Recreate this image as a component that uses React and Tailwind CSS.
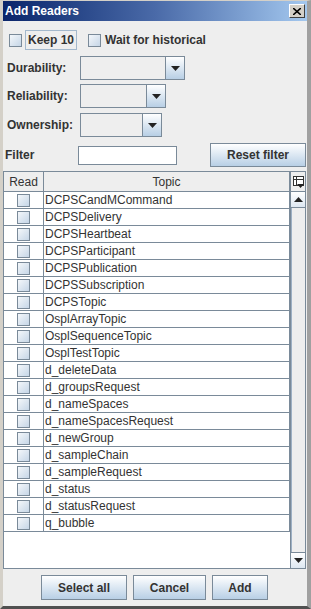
import React from "react";

const topics = [
  "DCPSCandMCommand",
  "DCPSDelivery",
  "DCPSHeartbeat",
  "DCPSParticipant",
  "DCPSPublication",
  "DCPSSubscription",
  "DCPSTopic",
  "OsplArrayTopic",
  "OsplSequenceTopic",
  "OsplTestTopic",
  "d_deleteData",
  "d_groupsRequest",
  "d_nameSpaces",
  "d_nameSpacesRequest",
  "d_newGroup",
  "d_sampleChain",
  "d_sampleRequest",
  "d_status",
  "d_statusRequest",
  "q_bubble",
];

function Check() {
  return (
    <span className="block w-[13px] h-[13px] border border-[#7a8a99] bg-gradient-to-br from-[#f4f7fa] to-[#c6d6e7]" />
  );
}

function Arrow({ up }) {
  return (
    <svg width="9" height="5" viewBox="0 0 9 5">
      <path d={up ? "M0 5 L4.5 0 L9 5 Z" : "M0 0 L9 0 L4.5 5 Z"} fill="#222" />
    </svg>
  );
}

function Combo({ boxW, label }) {
  return (
    <div className="flex items-center h-[24px]">
      <span className="w-[77px] pl-[4px] font-bold text-[12px] text-[#333]">{label}</span>
      <div className="flex h-[24px]">
        <div className={`h-full border border-[#7a8a99] bg-[#eeeeee] ${boxW}`} />
        <div className="w-[19px] h-full border border-l-0 border-[#7a8a99] bg-gradient-to-b from-[#ffffff] to-[#b8cfe5] flex items-center justify-center">
          <Arrow />
        </div>
      </div>
    </div>
  );
}

function Btn({ children, w }) {
  return (
    <div className={`${w} h-[25px] border border-[#7a8a99] bg-gradient-to-b from-[#ffffff] to-[#b8cfe5] flex items-center justify-center font-bold text-[12px] text-[#333]`}>
      {children}
    </div>
  );
}

export default function App() {
  return (
    <div
      className="w-[311px] h-[609px] flex flex-col bg-[#eeeeee] border-t border-l-[3px] border-r-[4px] border-b-[3px] border-t-[#d4d0c8] border-l-[#d4d0c8] border-r-[#a0a0a0] border-b-[#505050] overflow-hidden"
      style={{ fontFamily: '"Liberation Sans", Arial, sans-serif' }}
    >
      {/* title bar */}
      <div className="h-[20px] -mx-[3px] px-[5px] flex items-center justify-between bg-gradient-to-r from-[#0a246a] via-[#4a6aa8] to-[#a6caf0]">
        <span className="text-white font-bold text-[12px]">Add Readers</span>
        <div className="w-[16px] h-[14px] bg-[#d4d0c8] border border-t-white border-l-white border-r-[#404040] border-b-[#404040] flex items-center justify-center">
          <svg width="8" height="7" viewBox="0 0 8 7">
            <path d="M0 0 L8 7 M8 0 L0 7" stroke="#000" strokeWidth="1.6" />
          </svg>
        </div>
      </div>

      {/* checkboxes */}
      <div className="mt-[9px] h-[20px] flex items-center pl-[6px]">
        <Check />
        <span className="ml-[3px] h-[20px] px-[2px] flex items-center border border-[#a3b8cc] font-bold text-[12px] text-[#333]">
          Keep 10
        </span>
        <span className="ml-[11px]"><Check /></span>
        <span className="ml-[4px] font-bold text-[12px] text-[#333]">Wait for historical</span>
      </div>

      <div className="mt-[6px]"><Combo label="Durability:" boxW="w-[86px]" /></div>
      <div className="mt-[4px]"><Combo label="Reliability:" boxW="w-[67px]" /></div>
      <div className="mt-[5px]"><Combo label="Ownership:" boxW="w-[63px]" /></div>

      {/* filter */}
      <div className="mt-[6px] h-[24px] flex items-center">
        <span className="w-[75px] pl-[2px] font-bold text-[12px] text-[#333]">Filter</span>
        <div className="w-[99px] h-[19px] border border-[#7a8a99] bg-white" />
        <div className="ml-auto mr-[1px]">
          <Btn w="w-[96px] !h-[24px]">Reset filter</Btn>
        </div>
      </div>

      {/* table */}
      <div className="mt-[4px] mr-[1px] h-[398px] border border-[#7a8a99] flex bg-white">
        <div className="flex-1 flex flex-col">
          <div className="h-[20px] flex border-b border-[#7a8a99] bg-[#eeeeee] text-[12px] text-[#333]">
            <span className="w-[40px] border-r border-[#7a8a99] flex items-center justify-center">Read</span>
            <span className="flex-1 border-r border-[#7a8a99] flex items-center justify-center">Topic</span>
          </div>
          {topics.map((t) => (
            <div key={t} className="h-[17px] flex border-b border-[#7a8a99] text-[12px] text-[#333]">
              <span className="w-[40px] border-r border-[#7a8a99] flex items-center justify-center">
                <Check />
              </span>
              <span className="flex-1 border-r border-[#7a8a99] pl-[1px] flex items-center">{t}</span>
            </div>
          ))}
        </div>
        {/* scrollbar */}
        <div className="w-[15px] flex flex-col bg-[#eeeeee] border-l border-[#7a8a99]">
          <div className="h-[20px] border-b border-[#7a8a99] flex items-center justify-center">
            <svg width="11" height="12" viewBox="0 0 11 12">
              <rect x="0.5" y="0.5" width="10" height="9" fill="#fff" stroke="#333" />
              <path d="M0.5 3.5 H10.5 M3.5 0.5 V9.5" stroke="#333" />
              <path d="M4 8 H11 L7.5 12 Z" fill="#222" />
            </svg>
          </div>
          <div className="h-[16px] border-b border-[#7a8a99] bg-gradient-to-b from-[#ffffff] to-[#dde7f1] flex items-center justify-center">
            <Arrow up />
          </div>
          <div className="flex-1 border-l border-[#9db0c4] bg-[#eeeeee]" />
          <div className="h-[16px] border-t border-[#7a8a99] bg-gradient-to-b from-[#ffffff] to-[#dde7f1] flex items-center justify-center">
            <Arrow />
          </div>
        </div>
      </div>

      {/* buttons */}
      <div className="mt-[6px] flex justify-center gap-[6px] pr-[1px]">
        <Btn w="w-[86px]">Select all</Btn>
        <Btn w="w-[73px]">Cancel</Btn>
        <Btn w="w-[56px]">Add</Btn>
      </div>
    </div>
  );
}
